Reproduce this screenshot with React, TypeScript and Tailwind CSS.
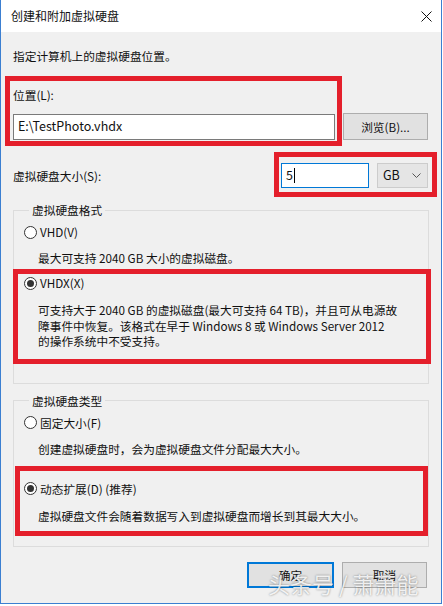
import React from 'react'

const font = '[font-family:"Noto_Sans_CJK_SC","Noto_Sans",sans-serif]'

const Radio = ({ checked, label }: { checked?: boolean; label: string }) => (
    <div className="flex items-center h-[16px] leading-[16px]">
        <span className="w-[13px] h-[13px] rounded-full border border-[#333] bg-white flex items-center justify-center shrink-0">
            {checked && <span className="w-[7px] h-[7px] rounded-full bg-[#333]" />}
        </span>
        <span className="ml-[3px]">{label}</span>
    </div>
)

const Group = ({ title, children }: { title: string; children: React.ReactNode }) => (
    <fieldset className="border border-[#dcdcdc] px-[10px]">
        <legend className="ml-[5px] px-[3px] leading-[16px]">{title}</legend>
        {children}
    </fieldset>
)

const App = () => {
    return (
        <div className={`w-[443px] h-[606px] bg-white relative overflow-hidden text-[11.7px] text-[#111] ${font}`}>
            <div className="w-[442px] h-[604px] flex flex-col border-l border-r border-b border-[#3b7fd1]">
                {/* title bar */}
                <div className="h-[32px] bg-white flex items-center justify-between pl-[10px] pr-[9px] shrink-0">
                    <span className="text-[12px] leading-[16px]">创建和附加虚拟硬盘</span>
                    <svg width="11" height="11" viewBox="0 0 11 11">
                        <path d="M0.5 0.5 L10.5 10.5 M10.5 0.5 L0.5 10.5" stroke="#111" strokeWidth="1" />
                    </svg>
                </div>

                <div className="flex-1 bg-[#f0f0f0] px-[12px] pt-[16px]">
                    <div className="leading-[16px]">指定计算机上的虚拟硬盘位置。</div>

                    <div className="mt-[23px] leading-[16px]">位置(L):</div>
                    <div className="mt-[10px] flex items-center gap-[8px]">
                        <div className="w-[322px] h-[26px] bg-white border border-[#7a7a7a] flex items-center pl-[4px] text-[12.5px]">
                            E:\TestPhoto.vhdx
                        </div>
                        <button className="w-[85px] h-[27px] bg-[#e1e1e1] border border-[#adadad] flex items-center justify-center">
                            浏览(B)...
                        </button>
                    </div>

                    <div className="mt-[23px] flex items-center justify-between pr-[1px]">
                        <span className="leading-[16px]">虚拟硬盘大小(S):</span>
                        <div className="flex items-center gap-[8px]">
                            <div className="w-[88px] h-[25px] bg-white border border-[#0078d7] flex items-center pl-[4px] text-[12.5px]">
                                5<span className="w-px h-[15px] bg-black ml-[1px]" />
                            </div>
                            <div className="w-[51px] h-[25px] bg-[#e5e5e5] border border-[#cccccc] flex items-center justify-between pl-[5px] pr-[6px] text-[12.5px]">
                                <span>GB</span>
                                <svg width="9" height="5" viewBox="0 0 9 5">
                                    <path d="M0.5 0.5 L4.5 4.5 L8.5 0.5" stroke="#555" strokeWidth="1" fill="none" />
                                </svg>
                            </div>
                        </div>
                    </div>

                    <div className="mt-[14px]">
                        <Group title="虚拟硬盘格式">
                            <div className="pt-[6px] pb-[34px]">
                                <Radio label="VHD(V)" />
                                <div className="mt-[10px] pl-[14px] leading-[16px]">最大可支持 2040 GB 大小的虚拟磁盘。</div>
                                <div className="mt-[9px]">
                                    <Radio checked label="VHDX(X)" />
                                </div>
                                <div className="mt-[11px] pl-[14px] leading-[15.5px]">
                                    可支持大于 2040 GB 的虚拟磁盘(最大可支持 64 TB)，并且可从电源故
                                    <br />
                                    障事件中恢复。该格式在早于 Windows 8 或 Windows Server 2012
                                    <br />
                                    的操作系统中不受支持。
                                </div>
                            </div>
                        </Group>
                    </div>

                    <div className="mt-[9px]">
                        <Group title="虚拟硬盘类型">
                            <div className="pt-[6px] pb-[22px]">
                                <Radio label="固定大小(F)" />
                                <div className="mt-[10px] pl-[14px] leading-[16px]">创建虚拟硬盘时，会为虚拟硬盘文件分配最大大小。</div>
                                <div className="mt-[24px]">
                                    <Radio checked label="动态扩展(D) (推荐)" />
                                </div>
                                <div className="mt-[11px] pl-[14px] leading-[16px]">虚拟硬盘文件会随着数据写入到虚拟硬盘而增长到其最大大小。</div>
                            </div>
                        </Group>
                    </div>

                    <div className="mt-[15px] flex justify-end gap-[8px] pr-[2px]">
                        <button className="w-[87px] h-[26px] bg-[#e1e1e1] border-2 border-[#0078d7] flex items-center justify-center">
                            确定
                        </button>
                        <button className="w-[85px] h-[26px] bg-[#e1e1e1] border border-[#adadad] flex items-center justify-center">
                            取消
                        </button>
                    </div>
                </div>
            </div>

            {/* annotation boxes */}
            <div className="absolute left-[5px] top-[76px] w-[337px] h-[70px] border-[5px] border-[#e41f2b] pointer-events-none" />
            <div className="absolute left-[274px] top-[152px] w-[163px] h-[45px] border-[5px] border-[#e41f2b] pointer-events-none" />
            <div className="absolute left-[13px] top-[269px] w-[418px] h-[95px] border-[5px] border-[#e41f2b] pointer-events-none" />
            <div className="absolute left-[15px] top-[466px] w-[413px] h-[70px] border-[5px] border-[#e41f2b] pointer-events-none" />

            {/* watermark */}
            <div className="absolute left-[268px] top-[569px] text-[22px] leading-[28px] text-white/85 [text-shadow:0_0_2px_rgba(0,0,0,0.5)] whitespace-nowrap">
                头条号 / 萧萧能
            </div>
        </div>
    )
}

export default App
